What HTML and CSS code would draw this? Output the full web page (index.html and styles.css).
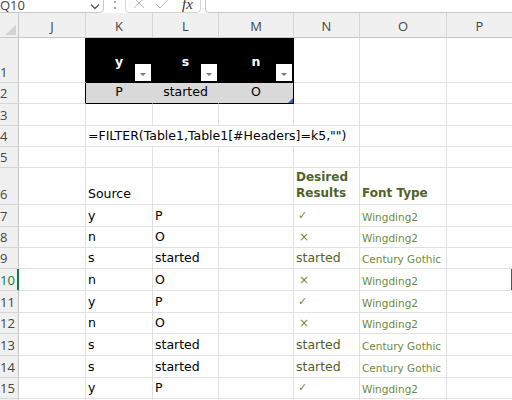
FILE: index.html
```html
<!DOCTYPE html>
<html lang="en">
<head>
  <meta charset="UTF-8">
  <title>FILTER by header</title>
  <link rel="stylesheet" href="styles.css">
</head>
<body>
  <div class="toolbar">
    <div class="name-box">
      <span class="name">Q10</span>
      <svg class="chevron" width="10" height="6" viewBox="0 0 10 6"><polyline points="1,0.5 5,4.5 9,0.5"/></svg>
    </div>
    <svg class="more" width="4" height="12" viewBox="0 0 4 12"><circle cx="2" cy="-3" r="1"/><circle cx="2" cy="3" r="1"/><circle cx="2" cy="9" r="1"/></svg>
    <div class="fx-buttons">
      <svg class="cancel" width="12" height="12" viewBox="0 0 12 12"><path d="M1 1 L11 11 M11 1 L1 11"/></svg>
      <svg class="enter" width="14" height="10" viewBox="0 0 14 10"><polyline points="1,5 5,9 13,0.5"/></svg>
      <span class="fx">fx</span>
    </div>
    <div class="formula"></div>
  </div>

  <div class="sheet" id="sheet"></div>

  <script>
    const cols = ['J', 'K', 'L', 'M', 'N', 'O', 'P', 'Q'];
    const rowCount = 16;

    const data = {
      1: {
        J: { c: 'tbl-left' },
        K: { t: 'y', c: 'th' },
        L: { t: 's', c: 'th' },
        M: { t: 'n', c: 'th' }
      },
      2: {
        J: { c: 'tbl-left' },
        K: { t: 'P', c: 'tb' },
        L: { t: 'started', c: 'tb' },
        M: { t: 'O', c: 'tb tb-last' }
      },
      4: { K: { t: '=FILTER(Table1,Table1[#Headers]=k5,"")', c: 'span4' } },
      6: {
        K: { t: 'Source' },
        N: { t: 'Desired Results', c: 'title wrap' },
        O: { t: 'Font Type', c: 'title' }
      }
    };

    // source values and what the formula should give back
    const source = [
      ['y', 'P'], ['n', 'O'], ['s', 'started'], ['n', 'O'], ['y', 'P'],
      ['n', 'O'], ['s', 'started'], ['s', 'started'], ['y', 'P']
    ];

    source.forEach(([k, l], i) => {
      let result;
      if (l === 'P') result = { t: '✓', c: 'mark' };
      else if (l === 'O') result = { t: '×', c: 'mark cross' };
      else result = { t: 'started', c: 'result' };

      data[i + 7] = {
        K: { t: k },
        L: { t: l },
        N: result,
        O: { t: l === 'started' ? 'Century Gothic' : 'Wingding2', c: 'font-name' }
      };
    });
    data[10].P = { c: 'sel-edge' };

    const sheet = document.getElementById('sheet');

    function addCell(cls, text) {
      const el = document.createElement('div');
      el.className = cls;
      if (text !== undefined) el.textContent = text;
      sheet.appendChild(el);
      return el;
    }

    addCell('corner');
    // Q is scrolled past the right edge, so its letter stays hidden
    cols.forEach(c => addCell('col-head', c === 'Q' ? '' : c));

    for (let r = 1; r <= rowCount; r++) {
      // last row only peeks in under the window edge
      const label = r < rowCount ? r : '';
      addCell(r === 10 ? 'row-head selected' : 'row-head', label);
      let skip = 0;
      cols.forEach(c => {
        if (skip > 0) { skip--; return; }
        const d = (data[r] || {})[c] || {};
        const el = addCell('cell ' + (d.c || ''));
        if (d.t) {
          const span = document.createElement('span');
          span.className = 'txt';
          span.textContent = d.t;
          el.appendChild(span);
        }
        if (d.c && d.c.includes('th')) {
          const btn = document.createElement('span');
          btn.className = 'filter';
          el.appendChild(btn);
        }
        if (d.c && d.c.includes('span4')) skip = 3;
      });
    }
  </script>
</body>
</html>
```

FILE: styles.css
```css
body {
  margin: 0;
  width: 512px;
  height: 400px;
  overflow: hidden;
  background: #fff;
  font-family: "DejaVu Sans", sans-serif;
}

/* formula bar */
.toolbar {
  display: flex;
  align-items: flex-end;
  height: 13px;
  overflow: hidden;
  background: #fff;
}

.name-box {
  display: flex;
  align-items: center;
  justify-content: space-between;
  box-sizing: border-box;
  flex: none;
  width: 112px;
  height: 26px;
  margin-left: -8px;
  padding: 9px 3px 0 7px;
  border: 1px solid #c8c8c8;
  border-radius: 4px;
  font: 13px "Open Sans", sans-serif;
  color: #444;
}

.chevron {
  fill: none;
  stroke: #555;
  stroke-width: 1.3;
  margin-top: 4px;
}

.more {
  flex: none;
  margin: 0 8px 2px 9px;
  fill: #8a8a8a;
}

.fx-buttons {
  display: flex;
  align-items: flex-end;
  box-sizing: border-box;
  flex: none;
  width: 76px;
  height: 26px;
  padding: 0 0 3px 7px;
  border: 1px solid #d4d4d4;
  border-radius: 4px;
}

.cancel {
  fill: none;
  stroke: #b8b8b8;
  stroke-width: 1;
}

.enter {
  fill: none;
  stroke: #b8b8b8;
  stroke-width: 1;
  margin-left: 10px;
}

.fx {
  margin-left: 13px;
  margin-bottom: -2px;
  font: italic 15px "Liberation Serif", serif;
  color: #333;
  line-height: 14px;
}

.formula {
  flex: none;
  box-sizing: border-box;
  width: 320px;
  height: 26px;
  margin-left: 4px;
  border: 1px solid #c8c8c8;
  border-radius: 4px;
}

/* grid */
.sheet {
  display: grid;
  grid-template-columns: 19px 67px 67px 66px 75px 66px 87px 66px 40px;
  grid-template-rows: 25px 45px 21px 22px 21px 21px 37px 22px 21px 21px 22px 22px 21px 22px 22px 21px 21px;
  width: 512px;
  overflow: hidden;
}

.corner,
.col-head,
.row-head,
.cell {
  box-sizing: border-box;
  border-right: 1px solid #e1e1e1;
  border-bottom: 1px solid #e1e1e1;
}

.corner {
  display: flex;
  justify-content: flex-end;
  align-items: flex-end;
  padding: 0 2px 2px 0;
  background: #f0f0f0;
  border-right-color: #c6c6c6;
  border-bottom-color: #c6c6c6;
}

.corner::after {
  content: '';
  width: 0;
  height: 0;
  border-left: 11px solid transparent;
  border-bottom: 10px solid #d2d2d2;
}

.col-head {
  display: flex;
  align-items: center;
  justify-content: center;
  padding-top: 2px;
  background: #f0f0f0;
  border-right-color: #d6d6d6;
  border-bottom-color: #c6c6c6;
  font: 13px "Open Sans", sans-serif;
  color: #444;
}

.row-head {
  display: flex;
  align-items: flex-end;
  padding: 0 0 1px 0;
  background: #f0f0f0;
  border-right-color: #c6c6c6;
  border-bottom-color: #d6d6d6;
  font: 13px "Open Sans", sans-serif;
  line-height: 18px;
  color: #444;
}

.row-head.selected {
  color: #107c41;
  border-right-color: #107c41;
  box-shadow: inset -1px 0 #107c41;
}

.cell {
  display: flex;
  align-items: flex-end;
  padding: 0 2px 2px 2px;
  white-space: nowrap;
  font-size: 12.5px;
  line-height: 16px;
  color: #000;
}

.span4 {
  grid-column: span 4;
}

/* Table1 */
.tbl-left {
  border-right-color: #000;
}

.th {
  position: relative;
  align-items: center;
  justify-content: center;
  padding: 4px 0 0 0;
  background: #000;
  border-right-color: #000;
  border-bottom-color: #000;
  color: #fff;
  font-weight: bold;
}

.filter {
  position: absolute;
  right: 1px;
  bottom: 1px;
  width: 16px;
  height: 17px;
  background: #fff;
}

.filter::after {
  content: '';
  position: absolute;
  left: 5px;
  top: 9px;
  border-left: 3px solid transparent;
  border-right: 3px solid transparent;
  border-top: 3px solid #777;
}

.tb {
  position: relative;
  justify-content: center;
  padding: 0 0 3px 0;
  background: #d9d9d9;
  border-right-color: #d9d9d9;
  border-bottom-color: #000;
}

.tb-last {
  border-right-color: #000;
}

.tb-last::after {
  content: '';
  position: absolute;
  right: 0;
  bottom: 0;
  border-left: 5px solid transparent;
  border-bottom: 5px solid #3b62b3;
}

/* expected output */
.title {
  color: #4f6228;
  font-weight: bold;
  font-size: 12px;
  padding-bottom: 3px;
}

.wrap {
  white-space: normal;
  line-height: 16px;
}

.mark {
  padding-left: 4px;
  color: #6f8a3a;
  font-size: 11px;
}

.cross {
  font-size: 12px;
  padding-left: 5px;
}

.result {
  color: #4f6228;
}

.font-name {
  color: #6f8a3a;
  font-size: 10.5px;
  padding-bottom: 1px;
}

.sel-edge {
  box-shadow: inset -1px 0 #107c41;
}
```
